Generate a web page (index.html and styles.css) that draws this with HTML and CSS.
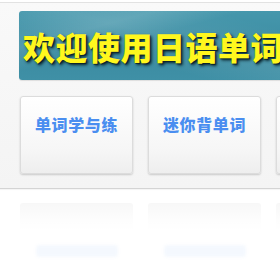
FILE: index.html
```html
<!DOCTYPE html>
<html lang="zh">
<head>
<meta charset="utf-8">
<link rel="stylesheet" href="styles.css">
</head>
<body>
<div class="panel">
  <div class="banner"><h1 class="title">欢迎使用日语单词</h1></div>
  <div class="buttons">
    <a class="btn"><span>单词学与练</span></a>
    <a class="btn"><span>迷你背单词</span></a>
    <a class="btn"><span>单词测试</span></a>
  </div>
</div>
<div class="reflection" aria-hidden="true">
  <div class="ghost"><div class="ghost-text"></div></div>
  <div class="ghost"><div class="ghost-text"></div></div>
  <div class="ghost"><div class="ghost-text"></div></div>
</div>
</body>
</html>
```
FILE: styles.css
```css
html {
  overflow: hidden;
  background: #ffffff;
}
body {
  margin: 0;
  padding: 0;
  font-family: "Noto Sans CJK SC", "Noto Sans", sans-serif;
}
.panel {
  margin-top: 2px;
  width: 600px;
  background: linear-gradient(#f9f9f9, #f4f4f4);
  border-top: 1px solid #e2e2e2;
  border-bottom: 1px solid #d4d4d4;
  padding: 8px 0 14px 19px;
  box-sizing: border-box;
  box-shadow: 0 1px 1px rgba(0,0,0,0.04);
}
.banner {
  height: 69px;
  width: 500px;
  border-radius: 3px;
  background:
    linear-gradient(165deg, rgba(255,255,255,0) 0%, rgba(255,255,255,0.12) 18%, rgba(255,255,255,0) 30%),
    linear-gradient(195deg, rgba(255,255,255,0) 40%, rgba(255,255,255,0.08) 60%, rgba(255,255,255,0) 75%),
    linear-gradient(#4597ac, #3b8ba1 60%, #3f90a6);
  display: flex;
  align-items: center;
  box-shadow: 0 1px 1px rgba(0,0,0,0.1);
}
.title {
  margin: 0 0 0 4px;
  font-size: 32px;
  font-weight: 900;
  letter-spacing: 0.5px;
  color: #fff71e;
  text-shadow: 2px 2px 3px #0a222a, 1px 1px 0 #1a3a44;
  white-space: nowrap;
  line-height: 1;
}
.buttons {
  display: flex;
  gap: 15px;
  margin-top: 16px;
  margin-left: 1px;
}
.btn {
  flex: none;
  width: 113px;
  height: 78px;
  box-sizing: border-box;
  border: 1px solid #dcdcdc;
  border-radius: 3px;
  background: linear-gradient(#ffffff, #f6f6f6 70%, #eeeeee);
  box-shadow: 0 1px 2px rgba(0,0,0,0.18);
  display: flex;
  justify-content: center;
  align-items: flex-start;
  padding-top: 17px;
  font-size: 16px;
  font-weight: 900;
  line-height: 20px;
  color: #4a8ef0;
  letter-spacing: 0.6px;
}
.reflection {
  display: flex;
  gap: 15px;
  margin: 14px 0 0 20px;
  width: 600px;
}
.ghost {
  flex: none;
  width: 113px;
  height: 70px;
  box-sizing: border-box;
  border-radius: 3px;
  background: linear-gradient(rgba(0,0,0,0.03), rgba(0,0,0,0.01) 20%, rgba(0,0,0,0) 40%);
  padding-top: 42px;
  display: flex;
  justify-content: center;
}
.ghost-text {
  width: 82px;
  height: 12px;
  border-radius: 4px;
  background: rgba(74,142,240,0.06);
  filter: blur(1.5px);
}
```
